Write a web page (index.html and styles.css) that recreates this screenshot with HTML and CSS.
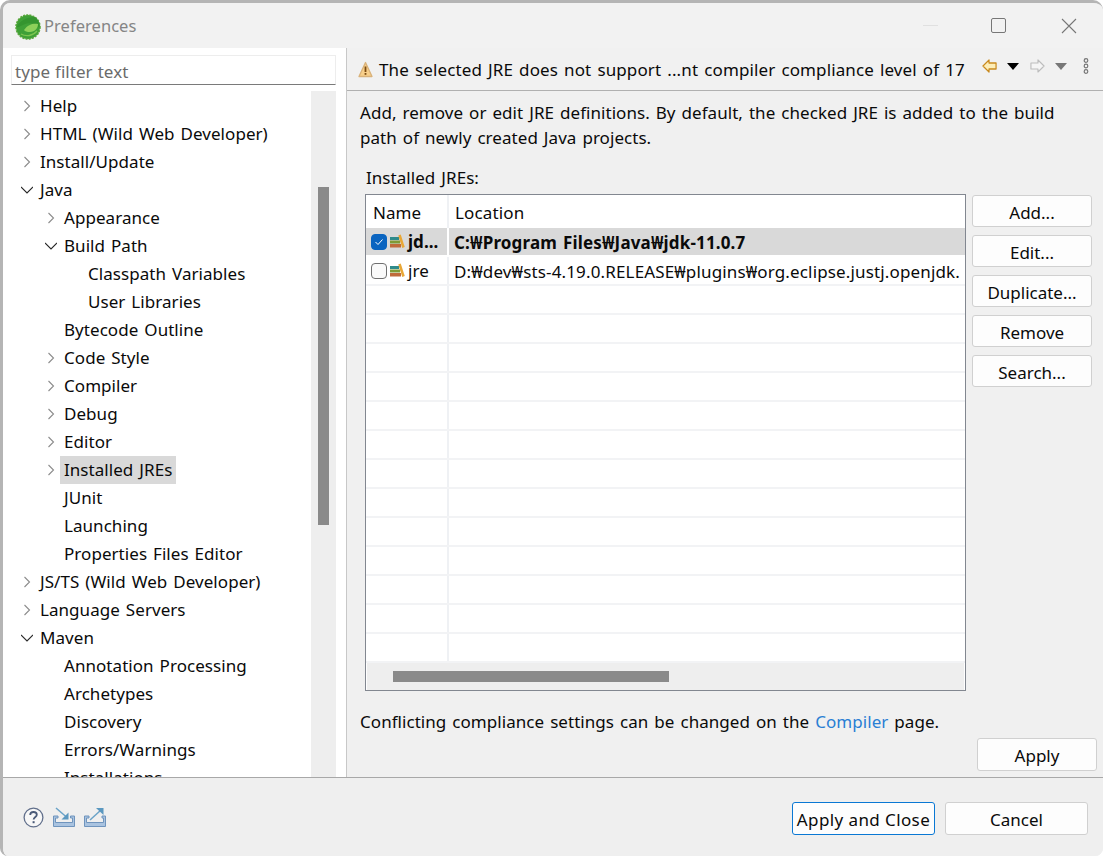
FILE: index.html
```html
<!DOCTYPE html>
<html lang="en">
<head>
<meta charset="utf-8">
<title>Preferences</title>
<link rel="stylesheet" href="styles.css">
</head>
<body>
<div class="window">
  <header class="titlebar">
    <svg class="logo" width="26" height="26" viewBox="0 0 26 26">
      <circle cx="13" cy="13" r="12" fill="#4fa53a" stroke="#5ba83c" stroke-width="1.6" stroke-dasharray="2 1.2"/>
      <circle cx="13" cy="13" r="11.4" fill="#3fa037"/>
      <path d="M2 13C4 7 12 3 20 3 24 6 25 10 24.500 14 21 9 13 8 8 11 5 12.500 3 13.500 2 13Z" fill="#35952f"/>
      <path d="M9 16C13 10 19 9 23 10 23 14 20 18 15 18 12 18 10 17.500 9 16Z" fill="#8ed05a"/>
      <path d="M6 20C11 23 18 22 22 17" stroke="#7cc44f" stroke-width="1.3" fill="none"/>
    </svg>
    <span class="title">Preferences</span>
    <div class="wincontrols">
      <span class="wc-min"></span>
      <span class="wc-max"></span>
      <svg class="wc-close" width="16" height="16" viewBox="0 0 16 16"><path d="M1 1L15 15M15 1L1 15" stroke="#777" stroke-width="1.1" fill="none"/></svg>
    </div>
  </header>
  <main class="main">
    <aside class="left">
      <div class="filter">type filter text</div>
      <div class="treewrap">
        <ul class="tree">
          <li class="row l0"><svg class="tw" viewBox="0 0 12 12"><path d="M3.5 1L8.5 6 3.5 11" class="chev"/></svg>Help</li>
          <li class="row l0"><svg class="tw" viewBox="0 0 12 12"><path d="M3.5 1L8.5 6 3.5 11" class="chev"/></svg>HTML (Wild Web Developer)</li>
          <li class="row l0"><svg class="tw" viewBox="0 0 12 12"><path d="M3.5 1L8.5 6 3.5 11" class="chev"/></svg>Install/Update</li>
          <li class="row l0"><svg class="tw" viewBox="0 0 12 12"><path d="M0 3L6 9 12 3" class="chev dark"/></svg>Java</li>
          <li class="row l1"><svg class="tw" viewBox="0 0 12 12"><path d="M3.5 1L8.5 6 3.5 11" class="chev"/></svg>Appearance</li>
          <li class="row l1"><svg class="tw" viewBox="0 0 12 12"><path d="M0 3L6 9 12 3" class="chev dark"/></svg>Build Path</li>
          <li class="row l2">Classpath Variables</li>
          <li class="row l2">User Libraries</li>
          <li class="row l1 noarrow">Bytecode Outline</li>
          <li class="row l1"><svg class="tw" viewBox="0 0 12 12"><path d="M3.5 1L8.5 6 3.5 11" class="chev"/></svg>Code Style</li>
          <li class="row l1"><svg class="tw" viewBox="0 0 12 12"><path d="M3.5 1L8.5 6 3.5 11" class="chev"/></svg>Compiler</li>
          <li class="row l1"><svg class="tw" viewBox="0 0 12 12"><path d="M3.5 1L8.5 6 3.5 11" class="chev"/></svg>Debug</li>
          <li class="row l1"><svg class="tw" viewBox="0 0 12 12"><path d="M3.5 1L8.5 6 3.5 11" class="chev"/></svg>Editor</li>
          <li class="row l1"><svg class="tw" viewBox="0 0 12 12"><path d="M3.5 1L8.5 6 3.5 11" class="chev"/></svg><span class="sel">Installed JREs</span></li>
          <li class="row l1 noarrow">JUnit</li>
          <li class="row l1 noarrow">Launching</li>
          <li class="row l1 noarrow">Properties Files Editor</li>
          <li class="row l0"><svg class="tw" viewBox="0 0 12 12"><path d="M3.5 1L8.5 6 3.5 11" class="chev"/></svg>JS/TS (Wild Web Developer)</li>
          <li class="row l0"><svg class="tw" viewBox="0 0 12 12"><path d="M3.5 1L8.5 6 3.5 11" class="chev"/></svg>Language Servers</li>
          <li class="row l0"><svg class="tw" viewBox="0 0 12 12"><path d="M0 3L6 9 12 3" class="chev dark"/></svg>Maven</li>
          <li class="row l1 noarrow">Annotation Processing</li>
          <li class="row l1 noarrow">Archetypes</li>
          <li class="row l1 noarrow">Discovery</li>
          <li class="row l1 noarrow">Errors/Warnings</li>
          <li class="row l1 noarrow">Installations</li>
        </ul>
        <div class="vscroll"><span class="vthumb"></span></div>
      </div>
    </aside>
    <section class="right">
      <div class="banner">
        <svg class="warn" width="15" height="17" viewBox="0 0 15 17">
          <path d="M7.5 1.500L14 15.500H1Z" fill="#f8cf8a" stroke="#d9b27a" stroke-width="1.3" stroke-linejoin="round"/>
          <path d="M7.500 5.500V11" stroke="#7a4a10" stroke-width="1.800"/>
          <rect x="6.600" y="12" width="1.800" height="1.800" fill="#7a4a10"/>
        </svg>
        <span class="bannertext">The selected JRE does not support ...nt compiler compliance level of 17</span>
        <div class="navicons">
          <svg width="15" height="14" viewBox="0 0 16 14" preserveAspectRatio="none"><path d="M1 7L7.500 1V4H15V10H7.500V13Z" fill="#fdeeb8" stroke="#c98a1e" stroke-width="1.300" stroke-linejoin="round"/></svg>
          <svg class="drop" width="12" height="7" viewBox="0 0 13 7" preserveAspectRatio="none"><path d="M0 0H13L6.500 7Z" fill="#000"/></svg>
          <svg class="fwd" width="15" height="14" viewBox="0 0 16 14" preserveAspectRatio="none"><path d="M15 7L8.500 1V4H1V10H8.500V13Z" fill="#f5f5f5" stroke="#bdbdbd" stroke-width="1.200" stroke-linejoin="round"/></svg>
          <svg class="drop" width="12" height="7" viewBox="0 0 13 7" preserveAspectRatio="none"><path d="M0 0H13L6.500 7Z" fill="#777"/></svg>
          <svg class="more" width="6" height="16" viewBox="0 0 6 16"><g fill="none" stroke="#777" stroke-width="1.200"><circle cx="3" cy="2.500" r="1.800"/><circle cx="3" cy="8" r="1.800"/><circle cx="3" cy="13.500" r="1.800"/></g></svg>
        </div>
      </div>
      <div class="content">
        <p class="desc">Add, remove or edit JRE definitions. By default, the checked JRE is added to the build path of newly created Java projects.</p>
        <div class="label">Installed JREs:</div>
        <div class="tablerow">
          <div class="table">
            <div class="thead"><div class="c1">Name</div><div class="c2">Location</div></div>
            <div class="tr selected">
              <div class="c1">
                <span class="cb on"><svg width="10" height="8" viewBox="0 0 10 8"><path d="M1.500 4L4 6.500 8.500 1.500" fill="none" stroke="#fff" stroke-width="1"/></svg></span>
                <svg class="book" width="15" height="15" viewBox="0 0 15 15"><rect x="0" y="3" width="9" height="3" fill="#2f8b8b"/><rect x="0" y="6.500" width="10" height="3" fill="#7f9a35"/><rect x="0" y="10" width="11" height="3.500" fill="#bf6a3a"/><path d="M9.500 1L13.500 13.500" stroke="#e8a736" stroke-width="2.600"/></svg>
                <span class="nm">jd...</span>
              </div>
              <div class="c2">C:₩Program Files₩Java₩jdk-11.0.7</div>
            </div>
            <div class="tr">
              <div class="c1">
                <span class="cb"></span>
                <svg class="book" width="15" height="15" viewBox="0 0 15 15"><rect x="0" y="3" width="9" height="3" fill="#2f8b8b"/><rect x="0" y="6.500" width="10" height="3" fill="#7f9a35"/><rect x="0" y="10" width="11" height="3.500" fill="#bf6a3a"/><path d="M9.500 1L13.500 13.500" stroke="#e8a736" stroke-width="2.600"/></svg>
                <span class="nm">jre</span>
              </div>
              <div class="c2">D:₩dev₩sts-4.19.0.RELEASE₩plugins₩org.eclipse.justj.openjdk.</div>
            </div>
            <div class="tr"><div class="c1"></div><div class="c2"></div></div>
            <div class="tr"><div class="c1"></div><div class="c2"></div></div>
            <div class="tr"><div class="c1"></div><div class="c2"></div></div>
            <div class="tr"><div class="c1"></div><div class="c2"></div></div>
            <div class="tr"><div class="c1"></div><div class="c2"></div></div>
            <div class="tr"><div class="c1"></div><div class="c2"></div></div>
            <div class="tr"><div class="c1"></div><div class="c2"></div></div>
            <div class="tr"><div class="c1"></div><div class="c2"></div></div>
            <div class="tr"><div class="c1"></div><div class="c2"></div></div>
            <div class="tr"><div class="c1"></div><div class="c2"></div></div>
            <div class="tr"><div class="c1"></div><div class="c2"></div></div>
            <div class="tr"><div class="c1"></div><div class="c2"></div></div>
            <div class="tr"><div class="c1"></div><div class="c2"></div></div>
            <div class="hscroll"><span class="hthumb"></span></div>
          </div>
          <div class="sidebtns">
            <button class="btn">Add...</button>
            <button class="btn">Edit...</button>
            <button class="btn">Duplicate...</button>
            <button class="btn">Remove</button>
            <button class="btn">Search...</button>
          </div>
        </div>
        <p class="note">Conflicting compliance settings can be changed on the <a class="link">Compiler</a> page.</p>
        <div class="applyrow"><button class="btn">Apply</button></div>
      </div>
    </section>
  </main>
  <footer class="footer">
    <div class="footicons">
      <svg width="21" height="21" viewBox="0 0 21 21"><circle cx="10.500" cy="10.500" r="9.400" fill="#f7f7f7" stroke="#62708c" stroke-width="1.300"/><path d="M7.200 8C7.200 5.800 8.800 5 10.500 5 12.400 5 13.800 6.100 13.800 7.800 13.800 9.900 10.600 10 10.600 12.600" fill="none" stroke="#4a5a78" stroke-width="1.800"/><rect x="9.600" y="14.200" width="2" height="2" fill="#4a5a78"/></svg>
      <svg width="22" height="20" viewBox="0 0 22 20"><path d="M.5 9V19.500H21.500V9H17.500V11H19.500V15.500H2.500V11H5V9Z" fill="#a9c3e0" stroke="#6f94bd"/><path d="M3 1L14 10.500" stroke="#6aa3c8" stroke-width="1.500"/><path d="M15.500 5.500V12.500H8.500Z" fill="#5b98c0"/></svg>
      <svg width="22" height="20" viewBox="0 0 22 20"><path d="M.5 9V19.500H21.500V9H18V11H19.500V15.500H2.500V11H5V9Z" fill="#a9c3e0" stroke="#6f94bd"/><path d="M6 13L17 3" stroke="#6aa3c8" stroke-width="1.500"/><path d="M12 1H19.500V8Z" fill="#5b98c0"/></svg>
    </div>
    <div class="footbtns">
      <button class="btn wide primary">Apply and Close</button>
      <button class="btn wide">Cancel</button>
    </div>
  </footer>
</div>
</body>
</html>
```
FILE: styles.css
```css
* { box-sizing: border-box; }
html, body { margin: 0; padding: 0; height: 100%; background: #fff; overflow: hidden; }
body { font-family: "Noto Sans", "Noto Sans CJK KR", sans-serif; font-size: 17px; color: #0a0a0a; word-spacing: 1.5px; letter-spacing: 0.05px; }
ul { list-style: none; margin: 0; padding: 0; }
p { margin: 0; }

.window {
  width: 1103px; height: 856px; background: #f0f0f0;
  border-top: 3px solid #b5b5b5; border-left: 3px solid #b5b5b5;
  border-radius: 10px 10px 8px 8px;
  display: flex; flex-direction: column; overflow: hidden;
}
.titlebar { height: 45px; flex: none; display: flex; align-items: center; padding-left: 12px; background: #f2f2f2; }
.logo { flex: none; margin-top: 2px; }
.title { margin-left: 3px; color: #858585; font-size: 16.5px; }
.wincontrols { margin-left: auto; display: flex; align-items: center; padding-right: 26px; }
.wc-min { width: 15px; height: 1px; background: #e0e0e0; margin-right: 53px; }
.wc-max { width: 15px; height: 15px; border: 1.3px solid #777; border-radius: 2px; margin-right: 55px; }
.wc-close { display: block; }

.main { flex: 1; min-height: 0; display: flex; border-bottom: 1px solid #a8a8a8; }
.left { width: 344px; flex: none; background: #fff; border-right: 1px solid #c8c8c8; padding-top: 7px; display: flex; flex-direction: column; min-height: 0; }
.filter { height: 30px; margin: 0 10px 0 8px; padding-left: 3px; border: 1px solid #ededed; border-bottom: 1px solid #7a7a7a; color: #6b6b6b; line-height: 32px; white-space: nowrap; word-spacing: 0.5px; }
.treewrap { flex: 1; min-height: 0; display: flex; margin-top: 6px; padding-right: 10px; overflow: hidden; }
.tree { flex: 1; min-width: 0; overflow: hidden; padding-top: 1px; }
.row { height: 28px; line-height: 28px; display: flex; align-items: center; white-space: nowrap; }
.l0 { padding-left: 18px; }
.l1 { padding-left: 42px; }
.l2 { padding-left: 85px; }
.noarrow { padding-left: 61px; }
.tw { width: 12px; height: 12px; margin-right: 7px; flex: none; }
.chev { fill: none; stroke: #8c8c8c; stroke-width: 1.1; }
.chev.dark { stroke: #2a2a2a; }
.sel { background: #d9d9d9; padding: 0 4px; margin-left: -4px; }
.vscroll { width: 25px; flex: none; background: #eeeeee; padding: 96px 7px 0; }
.vthumb { display: block; height: 338px; background: #8a8a8a; }

.right { flex: 1; min-width: 0; display: flex; flex-direction: column; background: #f0f0f0; }
.banner { height: 43px; flex: none; display: flex; align-items: center; padding: 0 14px 0 11px; border-bottom: 1px solid #b0b0b0; background: #f1f1f1; }
.warn { flex: none; margin-right: 6px; }
.bannertext { white-space: nowrap; letter-spacing: 0.12px; }
.navicons { display: flex; align-items: center; margin-left: auto; margin-top: -6px; }
.drop { margin: 0 11px 0 10px; }
.more { margin-left: 5px; }
.content { flex: 1; min-height: 0; padding: 9px 6px 0 13px; display: flex; flex-direction: column; }
.desc { line-height: 25px; width: 712px; }
.label { margin-top: 15px; padding-left: 6px; line-height: 25px; }
.tablerow { display: flex; align-items: flex-start; margin-top: 4px; padding-left: 5px; }
.table { width: 601px; height: 497px; flex: none; border: 1px solid #828790; background: #fff; display: flex; flex-direction: column; overflow: hidden; }
.thead { height: 33px; flex: none; display: flex; }
.thead .c1, .thead .c2 { line-height: 35px; padding-left: 7px; align-items: flex-start; }
.thead .c2 { padding-left: 6px; }
.c1 { width: 83px; flex: none; border-right: 2px solid #eff1f4; display: flex; align-items: center; padding-left: 5px; white-space: nowrap; overflow: hidden; }
.c2 { flex: 1; min-width: 0; padding-left: 5px; white-space: nowrap; overflow: hidden; letter-spacing: 0.15px; }
.tr { height: 29px; flex: none; display: flex; border-bottom: 2px solid #f2f3f5; line-height: 29px; }
.tr .c1 { height: 27px; }
.tr .c2 { height: 27px; line-height: 29px; }
.selected { background: #d9d9d9; font-weight: 700; border-bottom-color: #fff; }
.selected .c1 { border-right-color: #fff; }
.cb { width: 16px; height: 16px; border: 1px solid #707070; border-radius: 4px; background: #fafafa; flex: none; display: flex; align-items: center; justify-content: center; margin-right: 3px; }
.cb.on { background: #0a64c0; border-color: #0a64c0; }
.book { flex: none; margin-right: 3px; }
.hscroll { height: 27px; background: #eeeeee; margin: 0 1px; padding: 8px 0 0 26px; flex: none; }
.hthumb { display: block; width: 276px; height: 11px; background: #8a8a8a; }

.sidebtns { display: flex; flex-direction: column; gap: 8px; margin: 1px 0 0 6px; }
.btn { width: 120px; height: 32px; padding: 0; background: #fdfdfd; border: 1px solid #d0d0d0; border-radius: 3px; font: inherit; color: #0a0a0a; line-height: 34px; }
.note { margin-top: 18px; line-height: 25px; }
.link { color: #2a7fd4; }
.applyrow { display: flex; justify-content: flex-end; margin-top: 4px; }
.applyrow .btn { height: 33px; }

.footer { height: 78px; flex: none; display: flex; justify-content: space-between; padding: 24px 15px 0 20px; background: #efefef; }
.footicons { display: flex; gap: 9px; align-items: flex-start; padding-top: 5px; }
.footbtns { display: flex; gap: 10px; }
.btn.wide { width: 143px; height: 33px; }
.btn.primary { border: 1.3px solid #0a78d4; letter-spacing: 0.4px; }
```
